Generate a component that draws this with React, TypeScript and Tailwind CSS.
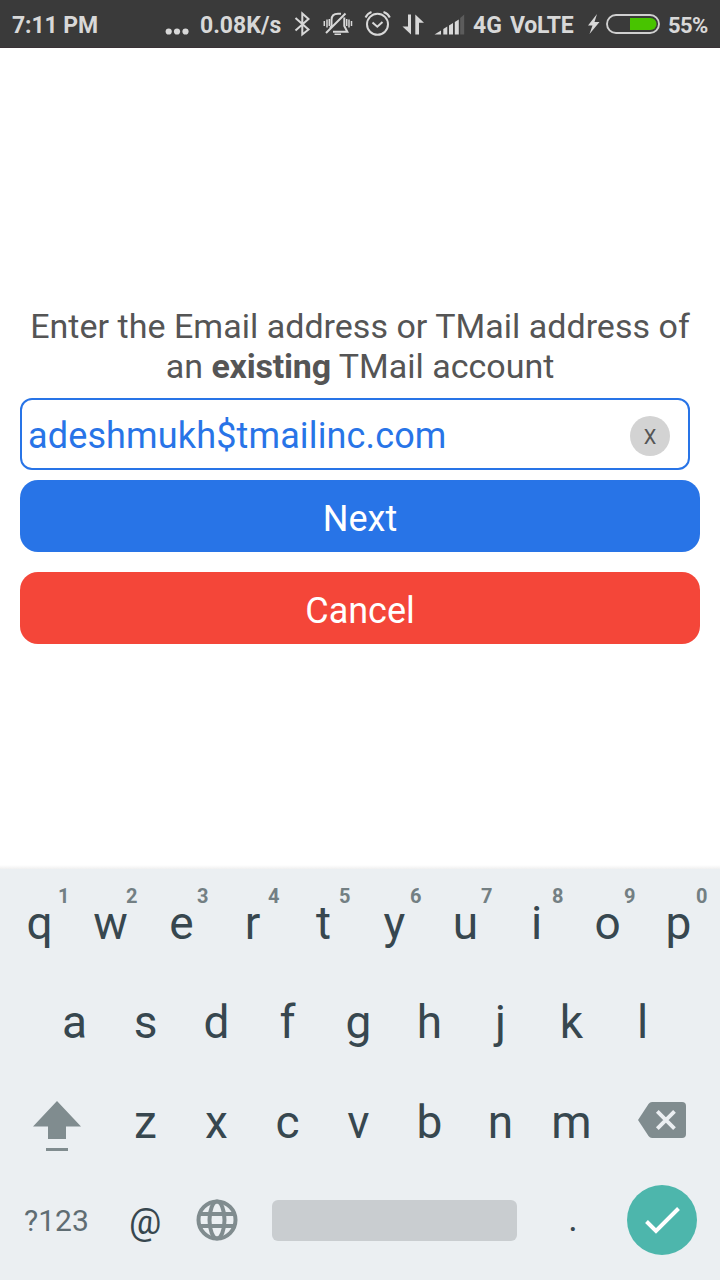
import { useState } from 'react';

const topRow = [
  { label: 'q', hint: '1', hintClass: 'left-[54px]' },
  { label: 'w', hint: '2', hintClass: 'left-[51px]' },
  { label: 'e', hint: '3', hintClass: 'left-[51px]' },
  { label: 'r', hint: '4', hintClass: 'left-[51px]' },
  { label: 't', hint: '5', hintClass: 'left-[51px]' },
  { label: 'y', hint: '6', hintClass: 'left-[51px]' },
  { label: 'u', hint: '7', hintClass: 'left-[51px]' },
  { label: 'i', hint: '8', hintClass: 'left-[51px]' },
  { label: 'o', hint: '9', hintClass: 'left-[52px]' },
  { label: 'p', hint: '0', hintClass: 'left-[53px]' },
];
const homeRow = ['a', 's', 'd', 'f', 'g', 'h', 'j', 'k', 'l'];
const bottomRow = ['z', 'x', 'c', 'v', 'b', 'n', 'm'];

function StatusBar() {
  return (
    <header className="flex h-12 shrink-0 items-center whitespace-nowrap border-b border-[#3a3236] bg-[#3a3a3a] pl-3 pt-[3px] text-[23px] font-bold leading-none text-[#d8d8d8]">
      <span className="w-[153px] tracking-[-0.1px]">7:11 PM</span>
      <svg className="mr-[10px] shrink-0" width="25" height="46" viewBox="165 2 25 46" fill="currentColor">
        <circle cx="168.700" cy="31.500" r="3.100" />
        <circle cx="177" cy="31.500" r="3.100" />
        <circle cx="185.500" cy="31.500" r="3.100" />
      </svg>
      <span className="w-[90px]">0.08K/s</span>
      <svg className="shrink-0" width="183" height="46" viewBox="290 2 183 46" fill="none" stroke="currentColor" strokeWidth="2">
        <path d="M295.500 18 308.500 29.500 302.300 34.500V13.500L308.500 19 295.500 30.500" />
        <path d="M330 28 331.500 26V20C331.500 15.800 334 13.700 338 13.700H341M344.300 17.500V26L347.300 31.800H333M326 33 345.500 13.500" />
        <path d="M334.500 34.300h6.500M324.300 21v5M327 19.500v8M329.300 19v7M346.700 19v7M349 19.500v8M351.500 21v5" strokeWidth="1.500" />
        <circle cx="377.500" cy="24.300" r="10.500" />
        <path d="M372.500 22.500 377.300 26.700 382.500 22M365.500 17.500C367 14.500 368.500 13 371.500 12M383.500 12C386.500 13 388.500 14.500 389.800 17.500" />
        <g fill="currentColor" stroke="none">
          <path d="M408 14.500h3V34.500L402.500 26.500H408zM415.300 34.500V14.500L424 22.700h-5V34.500z" />
          <path d="M434.500 34.500 441 30.500v4zM443.300 29l4-2.500v8h-4zM449 25.500l4-2.500v11.500h-4zM454.800 22l4-2.500v15h-4z" />
          <path d="M460.200 18l4-3.500v20h-4z" opacity=".22" />
        </g>
      </svg>
      <span className="w-[37px]">4G</span>
      <span className="w-[78px] tracking-[-0.2px]">VoLTE</span>
      <svg className="mr-[7px] shrink-0" width="73" height="46" viewBox="588 2 73 46">
        <path d="M597 14 588 25.500h4.500L589.500 34 599.500 22h-5z" fill="#d8d8d8" />
        <rect x="607" y="15" width="52" height="18" rx="9" fill="none" stroke="#d0d0d0" strokeWidth="1.900" />
        <path d="M630 18h20.500a6 6 0 0 1 0 12H630z" fill="#48c400" />
      </svg>
      <span className="pt-px text-[22px] tracking-[-0.6px]">55%</span>
    </header>
  );
}

type KeyProps = { label: string; hint?: string; hintClass?: string; onPress: (c: string) => void };

function Key({ label, hint, hintClass, onPress }: KeyProps) {
  return (
    <button type="button" onClick={() => onPress(label)} className="relative flex w-[71px] items-center justify-center pb-px text-[46px] leading-none">
      {label}
      {hint && <span className={`absolute top-[12px] text-[20px] font-bold leading-5 text-[#737f83] ${hintClass}`}>{hint}</span>}
    </button>
  );
}

export default function App() {
  const [address, setAddress] = useState('adeshmukh$tmailinc.com');
  const type = (c: string) => setAddress((a) => a + c);

  return (
    <div className="flex h-[1280px] w-[720px] flex-col overflow-hidden bg-white font-[Roboto,sans-serif]">
      <StatusBar />
      <main className="flex flex-1 flex-col px-5 pt-[258px]">
        <p className="text-center text-[34px] leading-10 text-[#555]">
          <span className="tracking-[0.02px]">Enter the Email address or TMail address of</span>
          <br />
          an <b className="tracking-[-0.2px]">existing</b> TMail account
        </p>
        <div className="mr-[10px] mt-3 flex h-[72px] items-center justify-between rounded-xl border-2 border-[#2874e7] pl-[6px] pr-[18px] pt-[3px] text-[36px] text-[#2874e7]">
          <span className="tracking-[0.14px]">{address}</span>
          <button type="button" onClick={() => setAddress('')} className="flex size-10 items-center justify-center rounded-full bg-[#d3d3d3] pt-[3px] text-[20px] leading-none text-[#555]">
            X
          </button>
        </div>
        <button type="button" className="mt-[10px] h-[72px] rounded-[18px] bg-[#2874e7] pt-[5px] text-[36px] leading-none text-white">Next</button>
        <button type="button" className="mt-5 h-[72px] rounded-[18px] bg-[#f44639] pt-[5px] text-[36px] leading-none text-white">Cancel</button>
      </main>
      <div className="h-1 shrink-0 bg-linear-to-b from-white to-[#f0f0f0]" />
      <section className="flex h-[411px] shrink-0 flex-col bg-[#ebeff2] pt-[5px] text-[#37474f]">
        <div className="flex h-[99px] pl-1">
          {topRow.map((k) => (
            <Key key={k.label} {...k} onPress={type} />
          ))}
        </div>
        <div className="flex h-[99px] pl-[39px]">
          {homeRow.map((k) => (
            <Key key={k} label={k} onPress={type} />
          ))}
        </div>
        <div className="flex h-[100px]">
          <button type="button" aria-label="Shift" className="flex w-[110px] items-center pl-8 pt-2">
            <svg width="50" height="52" viewBox="32 1100 50 52" fill="#808c8f">
              <path d="M57 1101 81 1126.500H66V1139H48V1126.500H33zM46 1148h22v3H46z" />
            </svg>
          </button>
          {bottomRow.map((k) => (
            <Key key={k} label={k} onPress={type} />
          ))}
          <button type="button" aria-label="Delete" onClick={() => setAddress((a) => a.slice(0, -1))} className="flex items-center pb-1 pl-[31px]">
            <svg width="48" height="36" viewBox="0 0 48 36">
              <path d="M14 0H44Q48 0 48 4V32Q48 36 44 36H14Q12 36 10.500 34L0 18 10.500 2Q12 0 14 0z" fill="#808c8f" />
              <path d="M19.300 9.300 36.500 26.700M36.500 9.300 19.300 26.700" stroke="#ebeff2" strokeWidth="3.800" />
            </svg>
          </button>
        </div>
        <div className="flex h-24 items-center">
          <button type="button" className="w-[129px] pl-6 pt-px text-left text-[30px] leading-none text-[#5f6d73]">?123</button>
          <button type="button" onClick={() => type('@')} className="w-[67px] pt-1 text-left text-[36px] leading-none">@</button>
          <svg className="shrink-0" width="42" height="42" viewBox="0 0 42 42" fill="none" stroke="#808c8f" strokeWidth="4">
            <circle cx="21" cy="21" r="18.500" />
            <ellipse cx="21" cy="21" rx="7.500" ry="18.500" />
            <path d="M4 15H38M4 27H38" />
          </svg>
          <button type="button" aria-label="Space" onClick={() => type(' ')} className="ml-[34px] mt-px h-[41px] w-[245px] rounded-md bg-[#c9cdd0]" />
          <button type="button" onClick={() => type('.')} className="w-[110px] pb-[2px] pl-[2px] text-center text-[36px] leading-none">.</button>
          <button type="button" aria-label="Done" className="size-[70px] rounded-full bg-[#4db6ac]">
            <svg width="70" height="70" viewBox="0 0 70 70" fill="none" stroke="white" strokeWidth="4">
              <path d="M19.500 36.500 29 46 51.500 23.500" />
            </svg>
          </button>
        </div>
      </section>
    </div>
  );
}
